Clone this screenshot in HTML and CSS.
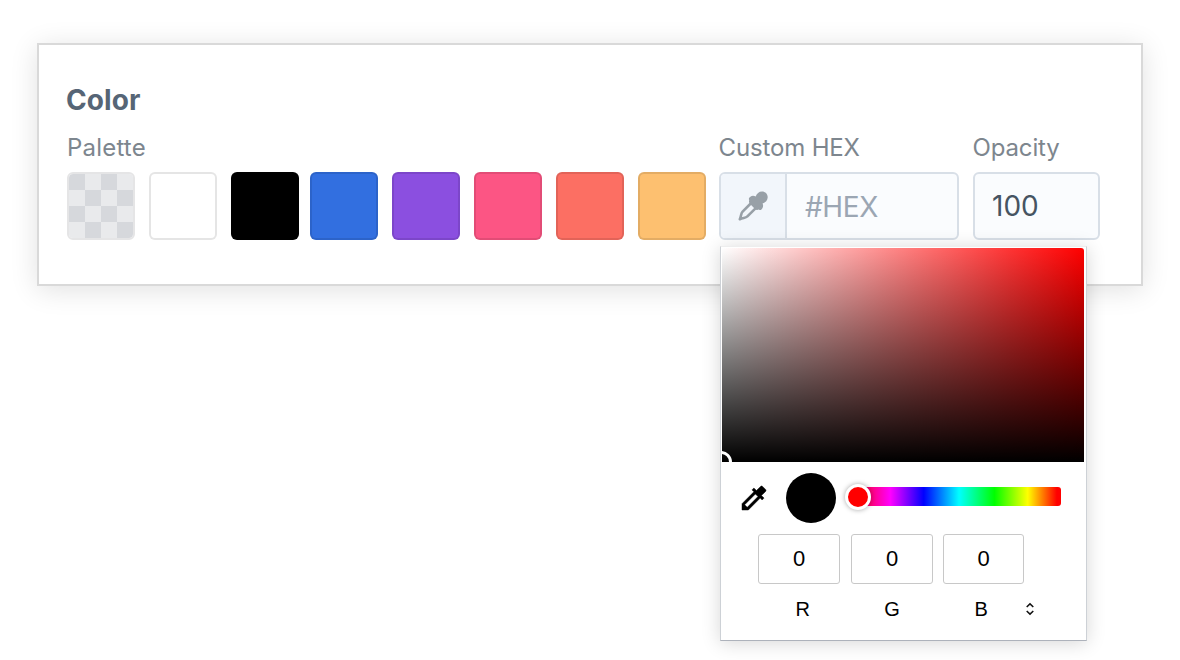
FILE: index.html
```html
<!DOCTYPE html>
<html lang="en">
<head>
<meta charset="utf-8">
<title>Color</title>
<link rel="stylesheet" href="styles.css">
</head>
<body>
<main class="panel">
  <h1 class="title">Color</h1>
  <div class="controls">
    <section class="field">
      <div class="label">Palette</div>
      <div class="swatches">
        <span class="swatch transparent"></span>
        <span class="swatch white"></span>
        <span class="swatch black"></span>
        <span class="swatch blue"></span>
        <span class="swatch purple"></span>
        <span class="swatch pink"></span>
        <span class="swatch coral"></span>
        <span class="swatch amber"></span>
      </div>
    </section>
    <section class="field hex-field">
      <div class="label narrow">Custom HEX</div>
      <div class="input hex">
        <div class="addon">
          <svg width="32" height="32" viewBox="0 0 32 32">
            <path class="tube" d="M16.2 11 5.6 21.6C3.8 23.4 4.400 25.8 2.800 29.200C6.200 27.600 8.600 28.200 10.400 26.400L21 15.800"/>
            <path class="bulb" d="M13.4 6.7c1.4-1.2 3.5-1.1 5.3-.3C19.600 3.500 22 1.400 25 1.400C28.200 1.400 30.700 3.800 30.700 7.200C30.700 10.200 28.500 12.500 25.600 13.400C26.400 15.200 26.300 17.300 25.100 18.700C24.200 20 23 20.600 21.900 19.500C20.300 20.300 19.100 20.100 18 19L13.100 14.100C12 13 11.700 11.600 12.300 10.100C11.300 8.900 12.100 7.600 13.400 6.700Z"/>
          </svg>
        </div>
        <span class="placeholder">#HEX</span>
      </div>
      <div class="picker">
        <div class="spectrum"><span class="cursor"></span></div>
        <div class="tools">
          <svg class="dropper" width="32" height="32" viewBox="0 0 24 24"><path d="M20.710 5.630l-2.340-2.340c-.390-.390-1.020-.390-1.410 0l-3.120 3.120-1.930-1.910-1.410 1.410 1.420 1.420L3 16.250V21h4.750l8.920-8.920 1.420 1.420 1.410-1.410-1.920-1.920 3.120-3.120c.4-.4.4-1.030.01-1.420zM6.920 19L5 17.080l8.060-8.060 1.920 1.920L6.920 19z"/></svg>
          <span class="preview"></span>
          <div class="hue"><span class="thumb"></span></div>
        </div>
        <div class="channels">
          <span class="channel">0</span><span class="channel">0</span><span class="channel">0</span>
        </div>
        <div class="names">
          <span>R</span><span>G</span><span>B</span>
          <svg width="10" height="14" viewBox="0 0 10 14"><path d="M1.700 5 5 1.900 8.300 5M1.700 9 5 12.100 8.300 9"/></svg>
        </div>
      </div>
    </section>
    <section class="field opacity-field">
      <div class="label narrow">Opacity</div>
      <div class="input opacity">100</div>
    </section>
  </div>
</main>
</body>
</html>
```
FILE: styles.css
```css
* { box-sizing: border-box; }

body {
  margin: 0;
  min-height: 660px;
  padding: 43px 37px 0;
  background: #fff;
  font-family: Inter, "Liberation Sans", sans-serif;
  overflow: hidden;
}

.panel {
  width: 1106px;
  height: 243px;
  padding: 37px 27px;
  border: 2px solid #d9d9d9;
  background: #fff;
  box-shadow: 0 4px 26px rgba(0, 0, 0, .12);
}

.title {
  margin: 0;
  font-size: 28px;
  line-height: 36px;
  font-weight: 700;
  letter-spacing: .1px;
  color: #566576;
}

.controls { display: flex; margin: 14px 0 0 1px; }
.hex-field { position: relative; margin-left: 14px; }
.opacity-field { margin-left: 14px; }

.label {
  height: 40px;
  font-size: 24px;
  line-height: 32px;
  letter-spacing: .2px;
  color: #7d868e;
}
.narrow { letter-spacing: -.15px; text-indent: -.5px; }

.swatches { display: flex; gap: 14px; }
.swatch {
  width: 68px;
  height: 68px;
  border: 2px solid rgba(0, 0, 0, .1);
  border-radius: 6px;
}
.transparent {
  border-color: #e5e5e6;
  background: conic-gradient(#e9eaec 25%, #d6d8dc 0 50%, #e9eaec 0 75%, #d6d8dc 0) padding-box 0 0 / 32px 32px;
}
.white { background: #fff; }
.black { background: #000; margin-left: -.4px; }
.blue { background: #326fe0; margin-left: -2.4px; }
.purple { background: #8b4fe0; }
.pink { background: #fc5584; }
.coral { background: #fc6f63; }
.amber { background: #fdc070; margin-left: -.4px; margin-right: -.8px; }

.input {
  height: 68px;
  border: 2px solid #d8dfe7;
  border-radius: 6px;
  background: #fafcfe;
  font-size: 28px;
}
.hex { display: flex; width: 240px; overflow: hidden; }
.addon {
  display: flex;
  align-items: center;
  justify-content: center;
  width: 66px;
  border-right: 2px solid #d8dfe7;
  background: #f2f6fb;
}
.tube { fill: none; stroke: #98a0a7; stroke-width: 2.600; stroke-linejoin: round; }
.bulb { fill: #98a0a7; }
.placeholder { padding-left: 18px; line-height: 66px; letter-spacing: -.4px; color: #9ba6b3; }
.opacity { width: 127px; padding-left: 17px; line-height: 65px; color: #465462; }

.picker {
  position: absolute;
  top: 114px;
  left: 1px;
  width: 367px;
  height: 395px;
  padding: 1px;
  border: 1px solid #cdd1d6;
  border-top-color: #eee;
  border-bottom-color: #adb2bb;
  background: #fff;
  box-shadow: 0 2px 18px rgba(0, 0, 0, .16);
}
.spectrum {
  position: relative;
  width: 362px;
  height: 214px;
  border-radius: 3px 3px 0 0;
  overflow: hidden;
  background: linear-gradient(transparent, #000), linear-gradient(90deg, #fff, #f00);
}
.cursor {
  position: absolute;
  left: -12px;
  bottom: -11px;
  width: 22px;
  height: 22px;
  border: 3px solid #fff;
  border-radius: 50%;
}
.tools { display: flex; align-items: center; height: 72px; padding-left: 16px; }
.dropper { stroke: #000; stroke-width: .35; }
.preview { width: 50px; height: 50px; margin-left: 16px; border-radius: 50%; background: #000; }
.hue {
  position: relative;
  width: 208px;
  height: 19px;
  margin: -3px 0 0 17px;
  border-radius: 3px;
  background: linear-gradient(90deg, #f00, #f0f 18%, #00f 34%, #0ff 51%, #0f0 68%, #ff0 84%, #f00 98%);
}
.thumb {
  position: absolute;
  left: -8px;
  top: -3px;
  width: 26px;
  height: 26px;
  border: 3px solid #fff;
  border-radius: 50%;
  background: #f00;
  box-shadow: 0 0 5px rgba(0, 0, 0, .35);
}
.channels { display: flex; gap: 11px; padding-left: 36px; }
.channel {
  width: 82px;
  height: 50px;
  border: 1.500px solid #c8c8c8;
  border-radius: 3px;
  text-align: center;
  font: 22px/48px "Liberation Sans", sans-serif;
}
.channel:last-child { width: 81px; margin-left: -1px; }
.names {
  display: flex;
  align-items: center;
  height: 50px;
  padding-left: 36px;
  font: 20px/50px "Liberation Sans", sans-serif;
}
.names span { width: 89.300px; text-align: center; }
.names svg { margin-left: -.5px; fill: none; stroke: #111; stroke-width: 1.500; }
```
